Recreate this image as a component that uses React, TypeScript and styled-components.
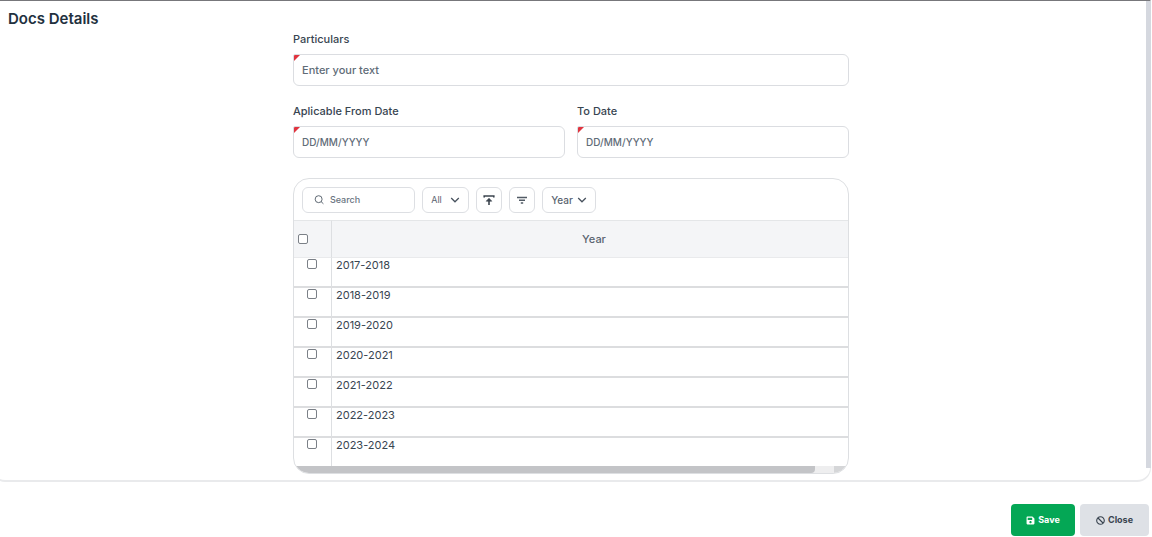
import React from 'react';
import styled, { createGlobalStyle } from 'styled-components';
import { FaSave, FaBan } from 'react-icons/fa';

const Global = createGlobalStyle`
  *, *::before, *::after { box-sizing: border-box; }
  body {
    margin: 0;
    background: #fff;
    color: #384551;
    font-family: Inter, "Liberation Sans", sans-serif;
    font-size: 11px;
    line-height: 16px;
    overflow-x: hidden;
  }
  button, input { font: inherit; color: inherit; }
`;

const Page = styled.div`
  display: flex;
  flex-direction: column;
  gap: 22px;
`;

const Card = styled.section`
  position: relative;
  margin: 0 1px 0 -9px;
  padding: 9px 0 6px;
  border: 1px solid #e9eaec;
  border-top-color: #77777b;
  border-bottom-width: 2px;
  border-radius: 0 0 14px 14px;
`;

const ScrollTrack = styled.div`
  position: absolute;
  top: 0;
  right: -1px;
  bottom: 12px;
  width: 5px;
  background: #d5d8df;
`;

const Title = styled.h1`
  margin: 0 0 3px 16px;
  font-size: 15px;
  line-height: 18px;
  font-weight: 600;
  color: #22303e;
`;

const Form = styled.form`
  width: 48%;
  min-width: 556px;
  margin: 0 auto;
`;

const FieldRow = styled.div`
  display: flex;
  gap: 12px;
  margin-bottom: 17px;
`;

const Field = styled.label`
  flex: 1;
  display: flex;
  flex-direction: column;
  gap: 7px;
  font-weight: 500;
`;

const InputFrame = styled.span`
  position: relative;
  display: block;
  height: 32px;
  border: 1px solid #dbdde1;
  border-radius: 2px 6px 6px 6px;
  overflow: hidden;
  &::before {
    content: '';
    position: absolute;
    top: 0;
    left: 0;
    border-top: 6px solid #e0343f;
    border-right: 6px solid transparent;
  }
`;

const TextInput = styled.input<{ $small?: boolean }>`
  display: block;
  width: 100%;
  height: 30px;
  padding: 0 8px;
  border: 0;
  outline: 0;
  background: transparent;
  font-size: ${p => (p.$small ? 10 : 11)}px;
  &::placeholder { color: #5f6c78; opacity: 1; }
`;

const Panel = styled.div`
  margin-top: 20px;
  border: 1px solid #dddfe2;
  border-radius: 16px;
  overflow: hidden;
`;

const Toolbar = styled.div`
  display: flex;
  align-items: center;
  gap: 7px;
  height: 41px;
  padding: 0 8px;
`;

const SearchBox = styled.label`
  display: flex;
  align-items: center;
  gap: 6px;
  width: 113px;
  height: 26px;
  padding: 0 8px 0 11px;
  border: 1px solid #dddfe3;
  border-radius: 6px;
`;

const SearchInput = styled.input`
  width: 100%;
  min-width: 0;
  padding: 0;
  border: 0;
  outline: 0;
  background: transparent;
  font-size: 9px;
  font-weight: 500;
  &::placeholder { color: #69747f; opacity: 1; }
`;

const ToolButton = styled.button<{ $width: number; $small?: boolean }>`
  display: flex;
  align-items: center;
  justify-content: center;
  gap: ${p => (p.$small ? 8 : 4)}px;
  width: ${p => p.$width}px;
  height: 26px;
  padding: 0;
  border: 1px solid #dddfe3;
  border-radius: 6px;
  background: #fff;
  font-size: ${p => (p.$small ? 9 : 10)}px;
  font-weight: ${p => (p.$small ? 400 : 500)};
  color: #5a6470;
`;

const Table = styled.table`
  width: 100%;
  border-collapse: separate;
  border-spacing: 0;
  table-layout: fixed;
`;

const HeadCell = styled.th`
  height: 38px;
  padding: 0 4px 0 12px;
  border-top: 1px solid #e4e6e8;
  border-bottom: 1px solid #e9eaec;
  background: #f4f5f7;
  font-weight: 500;
  color: #5a6470;
  &:first-child { width: 38px; padding: 0 4px; border-right: 1px solid #dddfe2; }
`;

const Cell = styled.td`
  height: 30px;
  padding: 0 4px;
  line-height: 14px;
  vertical-align: top;
  border-bottom: 2px solid #dcdddf;
  &:first-child { border-right: 1px solid #dddfe2; }
  tr:last-child & { height: 28px; border-bottom: 0; }
`;

const Check = styled.input<{ $indent?: boolean }>`
  appearance: none;
  display: block;
  width: 10px;
  height: 10px;
  margin: ${p => (p.$indent ? '1px 0 0 9px' : '0')};
  border: 1px solid #7b8087;
  border-radius: 2px;
  background: #fff;
  &:checked { background: #04a755; }
`;

const ScrollBar = styled.div`
  height: 7px;
  background: linear-gradient(to right, #eeeeef calc(100% - 14px), #d5d6d8 calc(100% - 14px));
`;

const ScrollThumb = styled.div`
  width: 94%;
  height: 100%;
  border-radius: 0 0 4px 0;
  background: #c3c4c7;
`;

const Actions = styled.div`
  display: flex;
  justify-content: flex-end;
  gap: 5px;
  padding-right: 3px;
`;

const ActionButton = styled.button<{ $primary?: boolean }>`
  display: flex;
  align-items: center;
  justify-content: center;
  gap: 3px;
  width: ${p => (p.$primary ? 64 : 69)}px;
  height: 32px;
  padding: 0;
  border: 0;
  border-radius: 4px;
  background: ${p => (p.$primary ? '#04a755' : '#dee1e6')};
  color: ${p => (p.$primary ? '#fff' : '#38434f')};
  font-size: 9px;
  font-weight: 700;
`;

const SearchIcon = () => (
  <svg width="12" height="12" viewBox="0 0 12 12" fill="none" stroke="#4f5a66" strokeWidth="1.1" aria-hidden="true">
    <circle cx="5.6" cy="5" r="4.2" />
    <path d="M8.6 8l2.8 2.6" />
  </svg>
);

const Chevron = () => (
  <svg width="10" height="10" viewBox="0 0 10 10" fill="none" stroke="#4a5460" strokeWidth="1.3" aria-hidden="true">
    <path d="M1.2 3L5 6.8 8.8 3" />
  </svg>
);

const ExportIcon = () => (
  <svg width="12" height="12" viewBox="0 0 12 12" fill="none" stroke="#3c454f" aria-hidden="true">
    <path strokeWidth="1.6" d="M1.2 3.6V2h9.6v1.6" />
    <path strokeWidth="1.6" d="M6 11V5" />
    <path fill="#3c454f" strokeWidth=".6" d="M3.2 7.2L6 4.2l2.8 3z" />
  </svg>
);

const FilterIcon = () => (
  <svg width="12" height="12" viewBox="0 0 12 12" fill="none" stroke="#525b65" strokeWidth="1.5" aria-hidden="true">
    <path d="M1 3.5h10M3 6.3h6M4.8 9h2.4" />
  </svg>
);

const years = ['2017-2018', '2018-2019', '2019-2020', '2020-2021', '2021-2022', '2022-2023', '2023-2024'];

export default function App() {
  return (
    <>
      <Global />
      <Page>
        <Card>
          <ScrollTrack aria-hidden="true" />
          <Title>Docs Details</Title>
          <Form id="docs" onSubmit={e => e.preventDefault()}>
            <FieldRow>
              <Field>
                Particulars
                <InputFrame><TextInput type="text" placeholder="Enter your text" /></InputFrame>
              </Field>
            </FieldRow>
            <FieldRow>
              <Field>
                Aplicable From Date
                <InputFrame><TextInput $small type="text" placeholder="DD/MM/YYYY" /></InputFrame>
              </Field>
              <Field>
                To Date
                <InputFrame><TextInput $small type="text" placeholder="DD/MM/YYYY" /></InputFrame>
              </Field>
            </FieldRow>
            <Panel>
              <Toolbar>
                <SearchBox>
                  <SearchIcon />
                  <SearchInput type="text" placeholder="Search" aria-label="Search" />
                </SearchBox>
                <ToolButton type="button" $width={47} $small>All <Chevron /></ToolButton>
                <ToolButton type="button" $width={26} aria-label="Export"><ExportIcon /></ToolButton>
                <ToolButton type="button" $width={26} aria-label="Filter"><FilterIcon /></ToolButton>
                <ToolButton type="button" $width={54}>Year <Chevron /></ToolButton>
              </Toolbar>
              <Table>
                <thead>
                  <tr>
                    <HeadCell><Check type="checkbox" aria-label="Select all years" /></HeadCell>
                    <HeadCell>Year</HeadCell>
                  </tr>
                </thead>
                <tbody>
                  {years.map(year => (
                    <tr key={year}>
                      <Cell><Check $indent type="checkbox" aria-label={year} /></Cell>
                      <Cell>{year}</Cell>
                    </tr>
                  ))}
                </tbody>
              </Table>
              <ScrollBar aria-hidden="true"><ScrollThumb /></ScrollBar>
            </Panel>
          </Form>
        </Card>
        <Actions>
          <ActionButton $primary type="submit" form="docs"><FaSave size={9} />Save</ActionButton>
          <ActionButton type="button"><FaBan size={9} />Close</ActionButton>
        </Actions>
      </Page>
    </>
  );
}
